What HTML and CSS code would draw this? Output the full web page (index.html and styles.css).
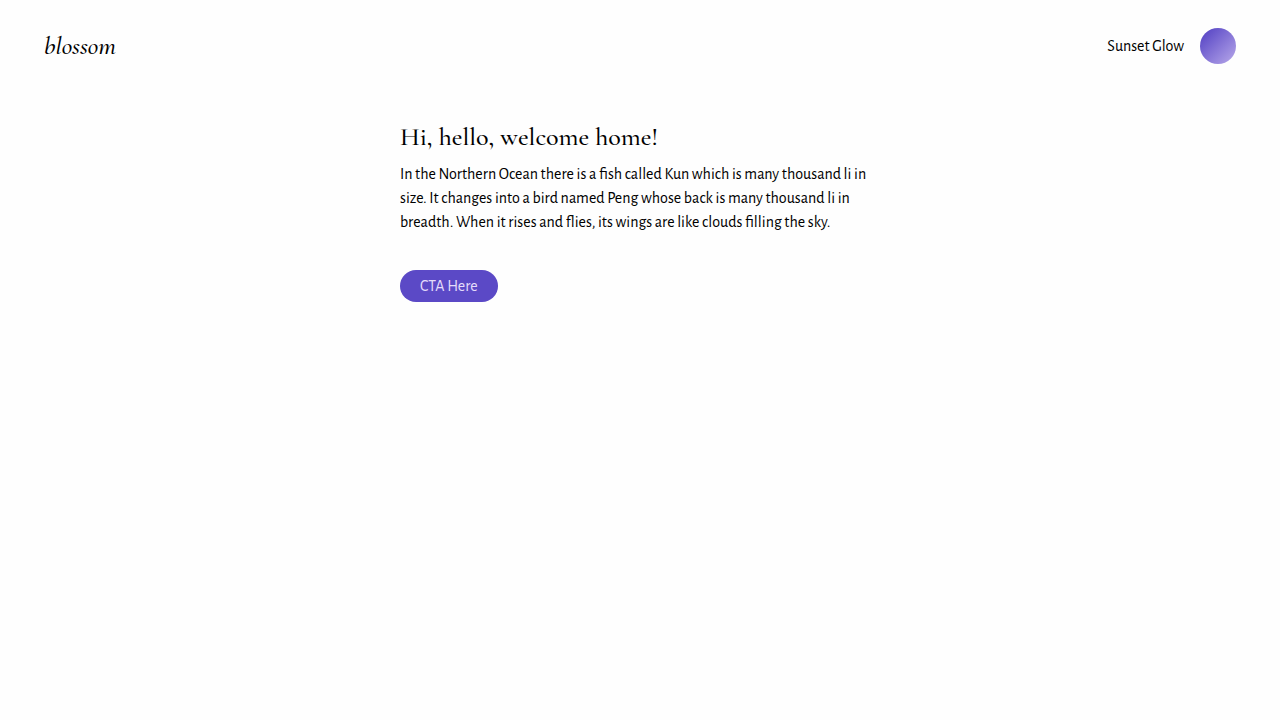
FILE: index.html
```html
<!DOCTYPE html>
<html lang="en">
<head>
<meta charset="utf-8">
<meta name="viewport" content="width=device-width, initial-scale=1">
<title>blossom</title>
<link rel="stylesheet" href="styles.css">
</head>
<body>
<header class="header">
  <a class="brand" href="#">blossom</a>
  <div class="theme">
    <span class="theme-name" id="theme-name">Sunset Glow</span>
    <button class="theme-swatch" type="button" aria-labelledby="theme-name"></button>
  </div>
</header>
<main class="content">
  <h1 class="title">Hi, hello, welcome home!</h1>
  <p class="text">In the Northern Ocean there is a fish called Kun which is many thousand li in size. It changes into a bird named Peng whose back is many thousand li in breadth. When it rises and flies, its wings are like clouds filling the sky.</p>
  <button class="cta" type="button">CTA Here</button>
</main>
</body>
</html>
```

FILE: styles.css
```css
* {
  box-sizing: border-box;
}

body {
  margin: 0;
  background: #fefefe;
  color: #000;
  font-family: "Alegreya Sans", Lato, sans-serif;
  font-size: 16px;
  line-height: 24px;
}

.header {
  display: flex;
  align-items: center;
  justify-content: space-between;
  padding: 28px 44px;
}

.brand {
  color: inherit;
  font-family: "Cormorant Garamond", Cormorant, "Liberation Serif", serif;
  font-size: 26px;
  font-style: italic;
  font-weight: 500;
  line-height: 36px;
  text-decoration: none;
}

.theme {
  display: flex;
  align-items: center;
  gap: 16px;
}

.theme-swatch {
  width: 36px;
  height: 36px;
  padding: 0;
  border: 0;
  border-radius: 50%;
  background: linear-gradient(135deg, #4f3dc2, #b8a9ea);
  cursor: pointer;
}

.content {
  max-width: 480px;
  margin: 0 auto;
  padding-top: 28px;
}

.title {
  margin: 0 0 8px;
  font-family: "Cormorant Garamond", Cormorant, "Liberation Serif", serif;
  font-size: 26px;
  font-weight: 500;
  line-height: 34px;
}

.text {
  margin: 0 0 36px;
}

.cta {
  height: 32px;
  padding: 0 20px;
  border: 0;
  border-radius: 16px;
  background: #5b49c6;
  color: #e4dcfa;
  font: inherit;
  cursor: pointer;
}
```
